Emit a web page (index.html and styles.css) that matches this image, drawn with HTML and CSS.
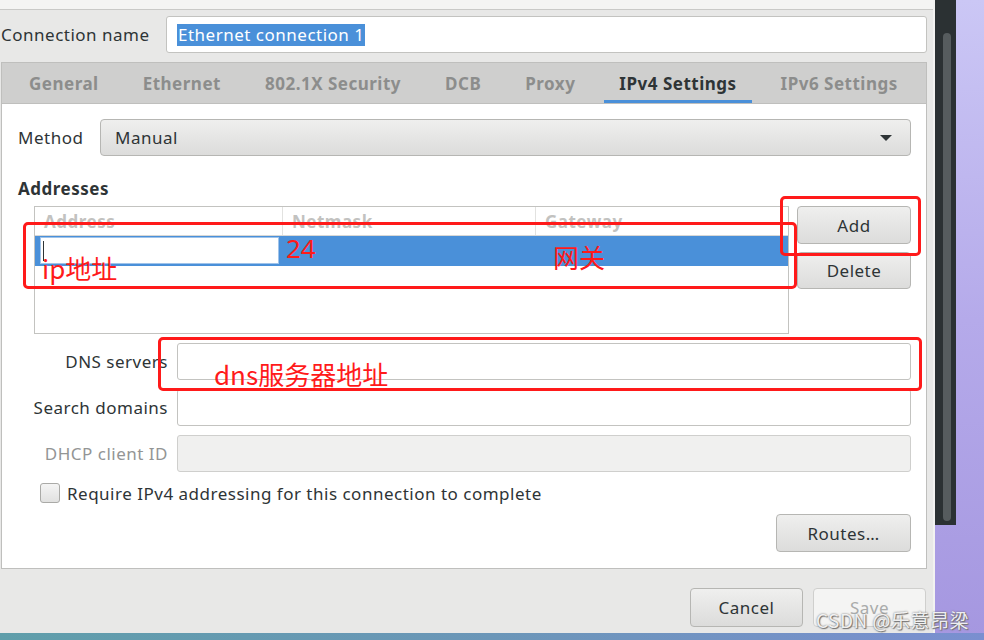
FILE: index.html
```html
<!DOCTYPE html>
<html>
<head>
<meta charset="utf-8">
<link rel="stylesheet" href="styles.css">
</head>
<body>
<div class="screen">
  <div class="main">
    <div class="dialog">
      <div class="topstrip"></div>
      <div class="conn-row">
        <span class="lbl">Connection name</span>
        <div class="entry conn-entry"><span class="sel">Ethernet connection 1</span></div>
      </div>
      <div class="notebook">
        <div class="tabs">
          <span class="tab">General</span>
          <span class="tab">Ethernet</span>
          <span class="tab">802.1X Security</span>
          <span class="tab">DCB</span>
          <span class="tab">Proxy</span>
          <span class="tab active">IPv4 Settings</span>
          <span class="tab">IPv6 Settings</span>
        </div>
        <div class="page">
          <div class="method-row">
            <span class="lbl">Method</span>
            <div class="combo"><span>Manual</span><span class="arrow"></span></div>
          </div>
          <div class="section-title">Addresses</div>
          <div class="addr-area">
            <div class="tree">
              <div class="tree-head">
                <span class="col c1">Address</span>
                <span class="col c2">Netmask</span>
                <span class="col c3">Gateway</span>
              </div>
              <div class="tree-row">
                <div class="cell-entry"><span class="cursor"></span></div>
              </div>
            </div>
            <div class="addr-buttons">
              <div class="btn">Add</div>
              <div class="btn">Delete</div>
            </div>
          </div>
          <div class="form">
            <span class="flbl">DNS servers</span>
            <div class="entry fentry"></div>
            <span class="flbl">Search domains</span>
            <div class="entry fentry"></div>
            <span class="flbl disabled">DHCP client ID</span>
            <div class="entry fentry dis"></div>
          </div>
          <div class="check-row">
            <span class="checkbox"></span>
            <span class="lbl">Require IPv4 addressing for this connection to complete</span>
          </div>
          <div class="routes-row">
            <div class="btn routes">Routes…</div>
          </div>
        </div>
      </div>
      <div class="action-row">
        <div class="btn act">Cancel</div>
        <div class="btn act save">Save</div>
      </div>
    </div>
    <div class="side"><div class="thumb"></div></div>
  </div>
  <div class="bottomstrip"></div>

  <div class="redbox r1"></div>
  <div class="redbox r2"></div>
  <div class="redbox r3"></div>
  <span class="redtxt t24">24</span>
  <span class="redtxt tip">ip地址</span>
  <span class="redtxt tgw">网关</span>
  <span class="redtxt tdns">dns服务器地址</span>
  <span class="watermark">CSDN @乐意昂梁</span>
</div>
</body>
</html>
```
FILE: styles.css
```css
* { box-sizing: border-box; }
html, body { margin: 0; padding: 0; }
body {
  width: 984px; height: 640px; overflow: hidden;
  font-family: "Noto Sans", "Noto Sans CJK SC", sans-serif;
  font-size: 17px; letter-spacing: 0.5px; color: #2e3436;
}
.screen {
  position: relative;
  width: 984px; height: 640px;
  display: flex; flex-direction: column;
  background: linear-gradient(180deg, #cbc7f5 0%, #b5aaea 50%, #a597e0 100%);
}
.main { display: flex; height: 633px; }
.dialog {
  width: 935px; height: 633px;
  background: #e8e8e7;
  border-right: 2px solid #f2f2f1;
  display: flex; flex-direction: column;
}
.topstrip { height: 10px; background: #f4f4f3; border-bottom: 1px solid #c9c9c7; }
.conn-row {
  display: flex; align-items: center;
  margin-top: 6px; height: 37px; padding-left: 1px;
}
.lbl { white-space: nowrap; }
.conn-row .lbl { width: 165px; }
.entry {
  background: #fff; border: 1px solid #c3c3c0; border-radius: 3px;
  height: 37px;
}
.conn-entry { width: 761px; display: flex; align-items: center; padding-left: 10px; }
.sel { background: #4a90d9; color: #fff; padding: 0 0 1px 1px; line-height: 21px; }

.notebook {
  margin: 9px 0 0 1px; width: 926px;
  border: 1px solid #bfbfbd;
  display: flex; flex-direction: column;
}
.tabs {
  height: 41px; background: #cfcfce;
  display: flex; padding-left: 12px; gap: 14px;
  border-bottom: 1px solid #bfbfbd;
}
.tab {
  padding: 0 15px; font-weight: bold; color: #8c8d8c;
  display: flex; align-items: center; white-space: nowrap;
  border-bottom: 3px solid transparent; padding-top: 3px;
}
.tab.active { color: #2e3436; border-bottom-color: #4a90d9; }
.page {
  background: #fff; height: 464px;
  padding: 15px 15px 0 16px;
  display: flex; flex-direction: column;
}
.method-row { display: flex; align-items: center; height: 37px; }
.method-row .lbl { width: 82px; }
.combo {
  flex: 1; height: 37px; border: 1px solid #b6b6b3; border-radius: 4px;
  background: linear-gradient(#efefee, #dcdcdb);
  display: flex; align-items: center; justify-content: space-between;
  padding: 0 18px 0 14px;
}
.arrow {
  width: 0; height: 0;
  border-left: 6px solid transparent; border-right: 6px solid transparent;
  border-top: 6px solid #2e3436;
}
.section-title { font-weight: bold; margin-top: 22px; line-height: 22px; }
.addr-area { display: flex; margin-top: 6px; padding-left: 16px; gap: 8px; }
.tree {
  width: 755px; height: 128px; border: 1px solid #c3c3c0; background: #fff;
}
.tree-head {
  display: flex; height: 29px; border-bottom: 1px solid #d8d8d6;
}
.col {
  color: #c2c2c0; font-weight: bold; padding-left: 9px;
  display: flex; align-items: center; border-right: 1px solid #e2e2e0;
}
.c1 { width: 248px; }
.c2 { width: 253px; }
.c3 { flex: 1; border-right: 0; }
.tree-row { height: 30px; background: #4a90d9; padding: 1px 0 1px 5px; }
.cell-entry {
  width: 239px; height: 27px; background: #fff; border: 1px solid #9fc3ea;
  padding: 3px 0 0 2px;
}
.cursor { display: block; width: 1px; height: 20px; background: #2e3436; }
.addr-buttons { display: flex; flex-direction: column; gap: 8px; }
.btn {
  width: 114px; height: 38px; border: 1px solid #b6b6b3; border-radius: 4px;
  background: linear-gradient(#efefee, #dcdcdb);
  display: flex; align-items: center; justify-content: center;
  color: #2e3436;
}
.addr-buttons .btn:nth-child(2) { height: 37px; }

.form {
  display: grid; grid-template-columns: 150px 1fr;
  column-gap: 9px; row-gap: 9px;
  margin-top: 9px;
}
.flbl { text-align: right; align-self: center; white-space: nowrap; }
.flbl.disabled { color: #939595; }
.fentry { height: 37px; }
.fentry.dis { background: #f0f0ef; border-color: #cfcfcd; }
.check-row { display: flex; align-items: center; gap: 7px; margin-top: 11px; padding-left: 22px; height: 20px; }
.checkbox {
  width: 20px; height: 20px; border: 1px solid #aaaaa7; border-radius: 3px;
  background: linear-gradient(#f4f4f4, #e1e1e0);
}
.routes-row { display: flex; justify-content: flex-end; margin-top: 11px; }
.btn.routes { width: 135px; height: 38px; }

.action-row { display: flex; justify-content: flex-end; gap: 10px; margin-top: 19px; padding-right: 7px; }
.btn.act { width: 113px; height: 39px; }
.btn.save { background: #f4f4f3; border-color: #cfcfcd; color: #a9abaa; }

.side {
  width: 21px; height: 525px; background: #2b3133;
  padding: 33px 0 0 8px;
}
.thumb { width: 8px; height: 488px; background: #565c5e; border-radius: 4px; }
.bottomstrip { height: 7px; background: linear-gradient(90deg, #5f9eaa, #6b96b8 50%, #7a8fd0); }

.redbox { position: absolute; border: 3px solid #ff1a1a; border-radius: 5px; }
.r1 { left: 23px; top: 222px; width: 774px; height: 67px; }
.r2 { left: 780px; top: 196px; width: 141px; height: 60px; }
.r3 { left: 158px; top: 337px; width: 764px; height: 54px; }
.redtxt {
  position: absolute; color: #ff1a1a; font-size: 26px; line-height: 30px;
  font-family: "Noto Sans CJK SC", "Noto Sans", sans-serif; white-space: nowrap;
  letter-spacing: 0;
}
.t24 { left: 286px; top: 233px; font-family: "Noto Sans", sans-serif; }
.tip { left: 42px; top: 253px; }
.tgw { left: 553px; top: 242px; }
.tdns { left: 214px; top: 359px; }
.watermark {
  position: absolute; left: 816px; top: 608px;
  font-size: 19px; line-height: 24px; color: rgba(255,255,255,0.9);
  letter-spacing: 0.5px;
  text-shadow: 0 0 2px #666, 1px 1px 1px #777;
  font-family: "Noto Sans CJK SC", "Noto Sans", sans-serif;
}
```
